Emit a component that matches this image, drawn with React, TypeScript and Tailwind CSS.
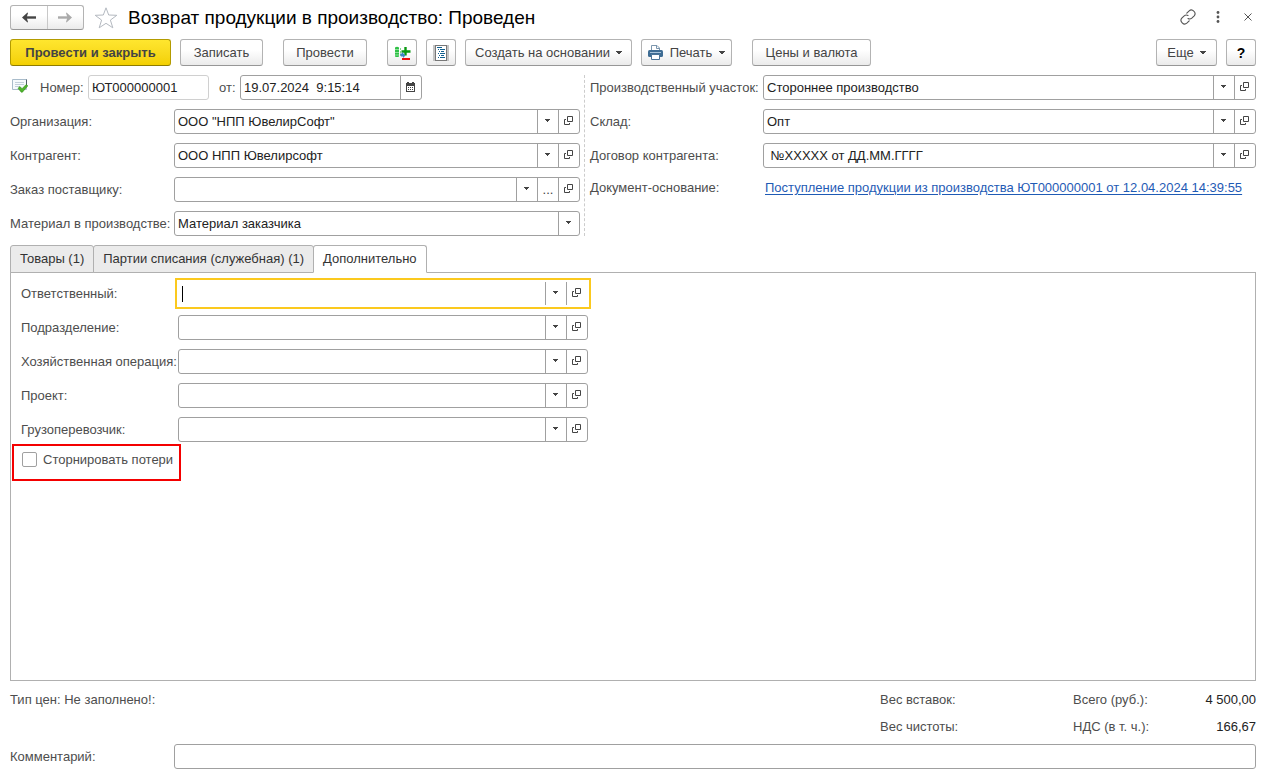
import type { ReactNode } from "react";
import clsx from "clsx";

const buttonStyle =
  "flex h-[27px] shrink-0 items-center justify-center rounded-[3px] border border-[#b3b3b3] border-b-[#979797] bg-linear-to-b from-white from-40% to-[#ebebeb] text-[#444]";

const extraFields = [
  { id: "responsible", label: "Ответственный:", focused: true },
  { id: "department", label: "Подразделение:" },
  { id: "operation", label: "Хозяйственная операция:" },
  { id: "project", label: "Проект:" },
  { id: "carrier", label: "Грузоперевозчик:" },
];

const tabs = [
  { name: "Товары (1)" },
  { name: "Партии списания (служебная) (1)" },
  { name: "Дополнительно", active: true },
];

function Caret() {
  return (
    <svg width="6" height="3" viewBox="0 0 6 3" shapeRendering="crispEdges">
      <path d="M0 0h6v1H5v1H4v1H2V2H1V1H0z" fill="#444" />
    </svg>
  );
}

function FieldCaret() {
  return (
    <svg width="6" height="3" viewBox="0 0 6 3" className="-mt-[2px]" shapeRendering="crispEdges">
      <path d="M0 0h5v1H4v1H3v1H2V2H1V1H0z" fill="#444" />
    </svg>
  );
}

function OpenIcon() {
  return (
    <svg width="10" height="9" viewBox="0 0 10 9" className="-mt-[2px]" fill="none" stroke="#444">
      <path d="M3.5 0.5h5v5h-5z" />
      <path d="M2 3.5H0.5v5h5V7" />
    </svg>
  );
}

function CalendarIcon() {
  return (
    <svg width="10" height="10" viewBox="0 0 10 10" className="-mt-[2px]" shapeRendering="crispEdges">
      <path d="M1 0h2v1h3V0h2v1h1v9H0V1h1zM1 4v5h7V4z" fillRule="evenodd" fill="#444" />
      <path d="M2 5h1v1H2zM4 5h1v1H4zM6 5h1v1H6zM2 7h1v1H2zM4 7h1v1H4zM6 7h1v1H6z" fill="#444" />
    </svg>
  );
}

function ArrowIcon({ className }: { className?: string }) {
  return (
    <svg width="14" height="11" viewBox="0 0 14 11" className={className}>
      <path d="M2 5.5h12" stroke="currentColor" strokeWidth="2.4" />
      <path d="M0 5.5L5.5 0.6L6 1L4.6 5.5L6 10L5.5 10.4z" fill="currentColor" />
    </svg>
  );
}

function StarIcon() {
  return (
    <svg width="24" height="22" viewBox="0 0 24 22" fill="none" stroke="#b4b9c0">
      <path d="M12 0.8L14.7 8L22.8 8.3L16.4 13.1L18.8 20.8L12 16.3L5.2 20.8L7.6 13.1L1.2 8.3L9.3 8z" />
    </svg>
  );
}

function PostedIcon() {
  return (
    <svg width="16" height="14" viewBox="0 0 16 14">
      <path d="M0.5 0.5h14v10h-14z" fill="#f6fafd" stroke="#a9bccb" />
      <path d="M14.5 0.5v6" stroke="#4e5c68" />
      <path d="M3 3.5h9M3 5.5h9M3 7.5h5" stroke="#c2cfda" />
      <path
        d="M6 9.3L8 7.6L10 9.7L14.2 5.5L15.8 6.8L10.4 13.2H9.3z"
        fill="#4fb52c"
        stroke="#2f8a1a"
        strokeWidth="0.6"
      />
    </svg>
  );
}

function MovementsIcon() {
  return (
    <svg width="17" height="16" viewBox="0 0 17 16">
      <path d="M1 2.5Q3 0.8 5 2.5V11.5Q3 12.6 1 11.5z" fill="#2fc046" />
      <path d="M1 4.5h4M1 7.5h4M1 10h4" stroke="#a5eaae" strokeWidth="0.8" />
      <path d="M6.5 3v8" stroke="#7fd68b" strokeDasharray="2 1" />
      <path d="M11.5 2v8.500M7.500 6.500h9" stroke="#0a9a12" strokeWidth="2.400" />
      <path d="M6 8.500h2V7l3.500 3.500L9 13v-1.500H7z" fill="#3d86c6" />
      <path d="M8 14h8" stroke="#ee0d0d" strokeWidth="2" />
    </svg>
  );
}

function ReportIcon() {
  return (
    <svg width="16" height="16" viewBox="0 0 16 16" shapeRendering="crispEdges">
      <path d="M0 0h3v16H0zM13 0h3v16h-3z" fill="#c4c4c4" />
      <path d="M2.5 0.5h11v15h-11z" fill="#fff" stroke="#777" />
      <path
        d="M4 2.5h5M7 4.5h5M8 6.5h3M7 8.5h5M8 10.5h3M7 12.5h5M5 4.5h1M6 6.5h1M5 8.5h1M6 10.5h1M5 12.5h1"
        stroke="#12608f"
      />
    </svg>
  );
}

function PrinterIcon() {
  return (
    <svg width="15" height="15" viewBox="0 0 15 15">
      <path d="M3.5 6V0.5h5.500l2.500 2.500V6" fill="#fff" stroke="#7a95ad" />
      <path d="M8.500 0.500v3h3" fill="none" stroke="#7a95ad" />
      <rect x="0" y="5" width="15" height="7" rx="1.500" fill="#3f6d94" />
      <path d="M2 7.500h11" stroke="#a9c3d9" />
      <path d="M3.500 9.500h8v5h-8z" fill="#fff" stroke="#4b7396" />
    </svg>
  );
}

function LinkIcon() {
  return (
    <svg width="16" height="16" viewBox="0 0 16 16" fill="none" stroke="#555" strokeWidth="1.1" strokeLinecap="round">
      <path d="M6.8 4.2L9.2 1.800Q11.500 -0.200 13.800 2.200Q16.200 4.500 14.200 6.800L11.800 9.200Q10 10.700 8 9.500" />
      <path d="M9.200 11.800L6.800 14.200Q4.500 16.200 2.200 13.800Q-0.200 11.500 1.800 9.200L4.200 6.800Q6 5.300 8 6.500" />
    </svg>
  );
}

type FieldProps = {
  id: string;
  value?: string;
  focused?: boolean;
  className?: string;
  children?: ReactNode;
};

function Field({ id, value = "", focused, className, children }: FieldProps) {
  return (
    <div
      className={clsx(
        "flex h-[25px] min-w-0 border bg-white",
        focused
          ? "border-transparent outline-2 outline-offset-1 outline-[#fbc91e]"
          : "rounded-[3px] border-[#a0a0a0]",
        className ?? "flex-1"
      )}
    >
      {focused && <span className="ml-[3px] h-4 w-px self-center bg-black" />}
      <input
        id={id}
        defaultValue={value}
        className="w-0 min-w-0 flex-1 whitespace-pre px-[3px] text-[#222] outline-none"
      />
      {children}
    </div>
  );
}

function FieldButton({ label, children }: { label: string; children: ReactNode }) {
  return (
    <button
      aria-label={label}
      className="flex w-[21px] shrink-0 items-center justify-center border-l border-[#a0a0a0] text-[#444]"
    >
      {children}
    </button>
  );
}

function PickButtons() {
  return (
    <>
      <FieldButton label="Выбрать">
        <FieldCaret />
      </FieldButton>
      <FieldButton label="Открыть">
        <OpenIcon />
      </FieldButton>
    </>
  );
}

type RowProps = { id: string; label: string; labelWidth: string; children: ReactNode };

function Row({ id, label, labelWidth, children }: RowProps) {
  return (
    <div className="flex h-[25px] items-center">
      <label htmlFor={id} className={clsx("shrink-0 whitespace-nowrap", labelWidth)}>
        {label}
      </label>
      {children}
    </div>
  );
}

function TitleBar() {
  return (
    <header className="flex h-[25px] items-center">
      <div className="flex h-[25px] w-[74px] rounded-[3px] border border-[#b3b3b3] border-b-[#979797] bg-linear-to-b from-white from-40% to-[#ebebeb]">
        <button
          aria-label="Назад"
          className="flex flex-1 items-center justify-center border-r border-[#c8c8c8] text-[#444]"
        >
          <ArrowIcon />
        </button>
        <button aria-label="Вперед" className="flex flex-1 items-center justify-center text-[#aaa]">
          <ArrowIcon className="rotate-180" />
        </button>
      </div>
      <button aria-label="В избранное" className="mx-[10px]">
        <StarIcon />
      </button>
      <h1 className="text-[19px] whitespace-nowrap text-black">
        Возврат продукции в производство: Проведен
      </h1>
      <div className="mr-1 ml-auto flex items-center pb-[2px]">
        <button aria-label="Получить ссылку">
          <LinkIcon />
        </button>
        <button aria-label="Меню" className="ml-5">
          <svg width="4" height="12" viewBox="0 0 4 12" fill="#555">
            <circle cx="2" cy="1.5" r="1.4" />
            <circle cx="2" cy="6" r="1.4" />
            <circle cx="2" cy="10.5" r="1.4" />
          </svg>
        </button>
        <button aria-label="Закрыть" className="ml-6">
          <svg width="8" height="8" viewBox="0 0 8 8" stroke="#555">
            <path d="M0.5 0.5L7.5 7.5M7.5 0.5L0.5 7.5" />
          </svg>
        </button>
      </div>
    </header>
  );
}

function Toolbar() {
  return (
    <div className="mt-[9px] flex gap-[9px]">
      <button className="flex h-[27px] w-[161px] shrink-0 items-center justify-center rounded-[3px] border border-[#b39b00] border-b-[#8f7c00] bg-linear-to-b from-[#ffe62e] to-[#f3d000] font-bold text-[#444]">
        Провести и закрыть
      </button>
      <button className={clsx(buttonStyle, "w-[83px]")}>Записать</button>
      <button className={clsx(buttonStyle, "ml-[11px] w-[84px]")}>Провести</button>
      <button aria-label="Движения документа" className={clsx(buttonStyle, "ml-[11px] w-[30px]")}>
        <MovementsIcon />
      </button>
      <button aria-label="Отчет" className={clsx(buttonStyle, "w-[30px]")}>
        <ReportIcon />
      </button>
      <button className={clsx(buttonStyle, "w-[167px] gap-[6px]")}>
        Создать на основании
        <Caret />
      </button>
      <button className={clsx(buttonStyle, "w-[91px] gap-[7px]")}>
        <PrinterIcon />
        Печать
        <Caret />
      </button>
      <button className={clsx(buttonStyle, "ml-[11px] w-[119px]")}>Цены и валюта</button>
      <button className={clsx(buttonStyle, "ml-auto w-[61px] gap-[6px]")}>
        Еще
        <Caret />
      </button>
      <button className={clsx(buttonStyle, "w-[30px] text-[14px] font-bold text-black")}>?</button>
    </div>
  );
}

function DocumentFields() {
  return (
    <div className="mt-[9px] flex">
      <div className="flex w-[570px] flex-col gap-[9px]">
        <div className="flex h-[25px] items-center">
          <span className="flex w-[30px] pb-1 pl-[2px]">
            <PostedIcon />
          </span>
          <label htmlFor="number" className="w-12">
            Номер:
          </label>
          <input
            id="number"
            defaultValue="ЮТ000000001"
            className="h-[25px] w-[121px] rounded-[3px] border border-[#d0d0d0] px-[3px] text-[#222] outline-none"
          />
          <label htmlFor="date" className="w-[31px] pl-[10px]">
            от:
          </label>
          <Field id="date" value="19.07.2024  9:15:14" className="w-[182px]">
            <FieldButton label="Календарь">
              <CalendarIcon />
            </FieldButton>
          </Field>
        </div>
        <Row id="org" label="Организация:" labelWidth="w-[164px]">
          <Field id="org" value={'ООО "НПП ЮвелирСофт"'}>
            <PickButtons />
          </Field>
        </Row>
        <Row id="partner" label="Контрагент:" labelWidth="w-[164px]">
          <Field id="partner" value="ООО НПП Ювелирсофт">
            <PickButtons />
          </Field>
        </Row>
        <Row id="order" label="Заказ поставщику:" labelWidth="w-[164px]">
          <Field id="order">
            <FieldButton label="Выбрать">
              <FieldCaret />
            </FieldButton>
            <FieldButton label="Показать все">...</FieldButton>
            <FieldButton label="Открыть">
              <OpenIcon />
            </FieldButton>
          </Field>
        </Row>
        <Row id="material" label="Материал в производстве:" labelWidth="w-[164px]">
          <div className="flex h-[25px] flex-1 rounded-[3px] border border-[#a0a0a0]">
            <select id="material" className="flex-1 appearance-none px-[3px] text-[#222] outline-none">
              <option>Материал заказчика</option>
            </select>
            <FieldButton label="Выбрать">
              <FieldCaret />
            </FieldButton>
          </div>
        </Row>
      </div>
      <div className="ml-1 w-[6px] shrink-0 border-l border-dashed border-[#ccc]" />
      <div className="flex min-w-0 flex-1 flex-col gap-[9px]">
        <Row id="site" label="Производственный участок:" labelWidth="w-[173px]">
          <Field id="site" value="Стороннее производство">
            <PickButtons />
          </Field>
        </Row>
        <Row id="store" label="Склад:" labelWidth="w-[173px]">
          <Field id="store" value="Опт">
            <PickButtons />
          </Field>
        </Row>
        <Row id="contract" label="Договор контрагента:" labelWidth="w-[173px]">
          <Field id="contract" value=" №ХХХХХ от ДД.ММ.ГГГГ">
            <PickButtons />
          </Field>
        </Row>
        <div className="flex pt-[3px]">
          <span className="w-[175px] shrink-0">Документ-основание:</span>
          <a href="#" className="whitespace-nowrap text-[#1f5bb5] underline underline-offset-2">
            Поступление продукции из производства ЮТ000000001 от 12.04.2024 14:39:55
          </a>
        </div>
      </div>
    </div>
  );
}

export default function App() {
  return (
    <div className="flex min-h-screen flex-col bg-white pt-[5px] pr-[18px] pb-[10px] pl-[10px] font-['Liberation_Sans',Arial,sans-serif] text-[13px] leading-4 text-[#4d4d4d]">
      <TitleBar />
      <Toolbar />
      <DocumentFields />

      <div role="tablist" className="relative z-10 mt-[9px] flex">
        {tabs.map((tab) => (
          <button
            key={tab.name}
            role="tab"
            aria-selected={!!tab.active}
            className={clsx(
              "-mr-px h-7 rounded-t-[3px] border border-[#b0b0b0] px-[9px] text-[#333]",
              tab.active ? "border-b-white bg-white" : "bg-[#ebebeb]"
            )}
          >
            {tab.name}
          </button>
        ))}
      </div>
      <main className="-mt-px flex-1 border border-[#b0b0b0]">
        <div className="flex w-[577px] flex-col gap-[9px] pt-2 pl-[10px]">
          {extraFields.map((field) => (
            <Row key={field.id} id={field.id} label={field.label} labelWidth="w-[157px]">
              <Field id={field.id} focused={field.focused}>
                <PickButtons />
              </Field>
            </Row>
          ))}
        </div>
        <label className="mt-[2px] ml-px flex h-[37px] w-[169px] gap-[6px] border-2 border-[#f40000] pt-[6px] pl-2">
          <input
            type="checkbox"
            className="size-[15px] shrink-0 appearance-none rounded-[2px] border border-[#a0a0a0]"
          />
          <span className="whitespace-nowrap">Сторнировать потери</span>
        </label>
      </main>

      <footer className="mt-[11px]">
        <div className="flex">
          <p>Тип цен: Не заполнено!:</p>
          <dl className="ml-auto grid grid-cols-[193px_103px_80px] gap-y-[11px]">
            <dt>Вес вставок:</dt>
            <dt>Всего (руб.):</dt>
            <dd className="text-right text-[#222]">4 500,00</dd>
            <dt>Вес чистоты:</dt>
            <dt>НДС (в т. ч.):</dt>
            <dd className="text-right text-[#222]">166,67</dd>
          </dl>
        </div>
        <div className="mt-[9px]">
          <Row id="comment" label="Комментарий:" labelWidth="w-[164px]">
            <Field id="comment" />
          </Row>
        </div>
      </footer>
    </div>
  );
}
